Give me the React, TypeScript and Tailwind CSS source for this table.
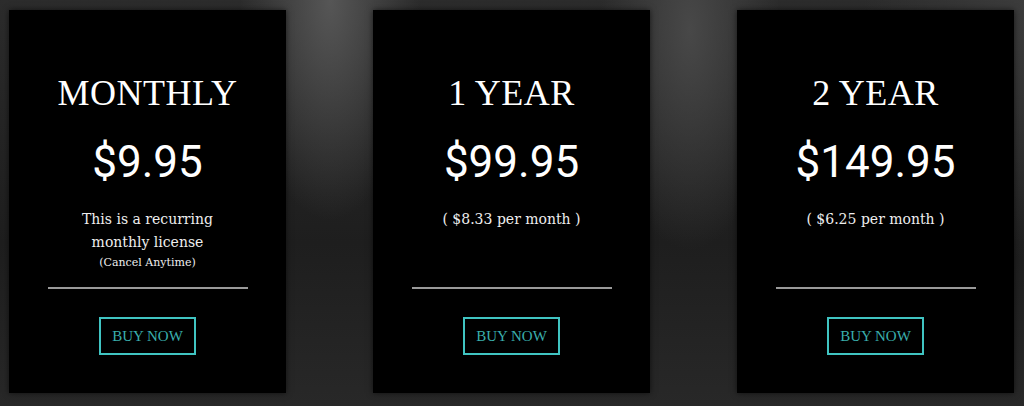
const plans = [
  {
    title: "MONTHLY",
    price: "$9.95",
    lines: ["This is a recurring", "monthly license"],
    note: "(Cancel Anytime)",
  },
  { title: "1 YEAR", price: "$99.95", lines: ["( $8.33 per month )"] },
  { title: "2 YEAR", price: "$149.95", lines: ["( $6.25 per month )"] },
];

function PlanCard({ plan }: { plan: (typeof plans)[number] }) {
  return (
    <div className="w-[277px] h-[383px] bg-black flex flex-col items-center shadow-[0_0_6px_rgba(0,0,0,0.6)]">
      <div className="h-[277px] w-full flex flex-col items-center pt-[63px]">
        <h2 className="font-['Liberation_Serif',serif] text-[36px] leading-[40px] text-white tracking-[0.5px]">
          {plan.title}
        </h2>
        <div className="mt-[25px] font-['Roboto',sans-serif] text-[44px] leading-[48px] text-white">
          {plan.price}
        </div>
        <div className="mt-[22px] flex flex-col items-center font-['DejaVu_Serif',serif] text-[14px] leading-[23px] text-[#eeeeee]">
          {plan.lines.map((l) => (
            <span key={l}>{l}</span>
          ))}
          {plan.note && <span className="text-[11px] leading-[16px] mt-[1px]">{plan.note}</span>}
        </div>
      </div>
      <div className="w-[200px] h-[2px] bg-[#9a9a9a]" />
      <button className="mt-[28px] w-[97px] h-[38px] border-2 border-[#40c4c2] text-[#3aaeac] font-['Liberation_Serif',serif] text-[15px]">
        BUY NOW
      </button>
    </div>
  );
}

export default function App() {
  return (
    <div className="relative w-[1024px] h-[406px] overflow-hidden bg-[#222222] bg-[radial-gradient(ellipse_90px_220px_at_330px_0px,#565656,transparent),radial-gradient(ellipse_90px_220px_at_690px_30px,#484848,transparent),radial-gradient(ellipse_160px_260px_at_1024px_0px,#3c3c3c,transparent),linear-gradient(180deg,#2c2c2c,#1e1e1e_60%,#282828)]">
      <div className="flex justify-between pl-[9px] pr-[10px] pt-[10px]">
        {plans.map((p) => (
          <PlanCard key={p.title} plan={p} />
        ))}
      </div>
    </div>
  );
}
